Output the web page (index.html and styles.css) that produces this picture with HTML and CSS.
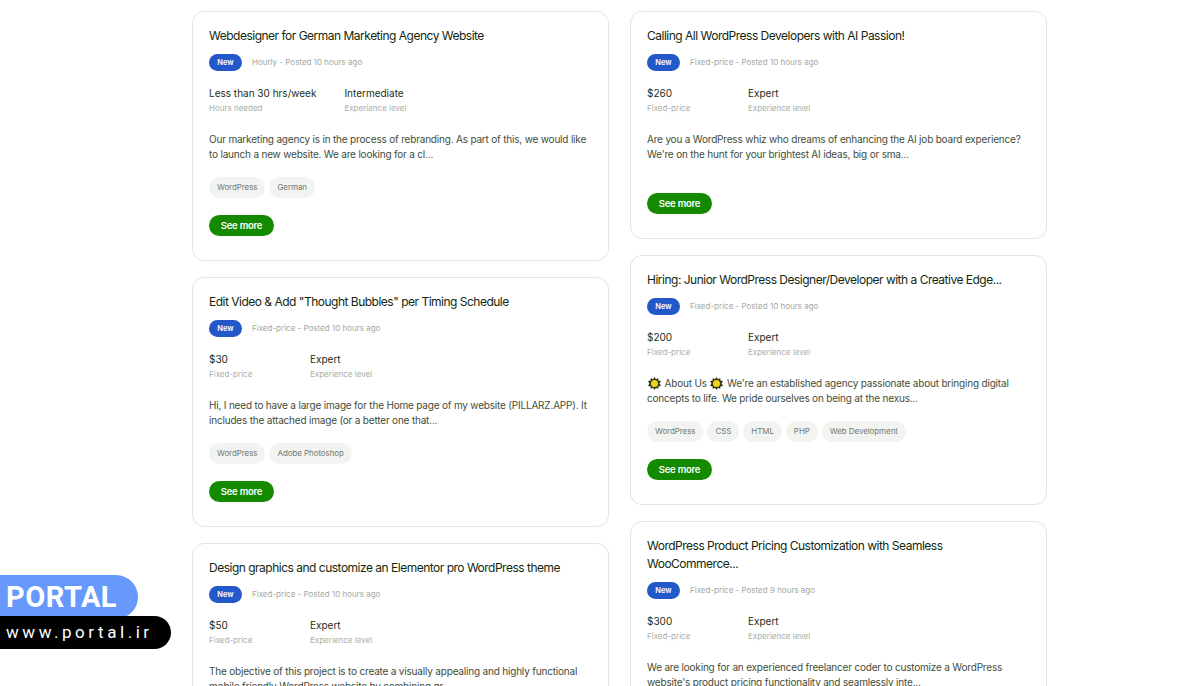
FILE: index.html
```html
<!DOCTYPE html>
<html>
<head>
  <title>Jobs</title>
  <link rel="stylesheet" href="styles.css">
</head>
<body>
  <svg width="0" height="0" class="defs">
    <symbol id="star" viewBox="0 0 14 14">
      <path fill="#2e3a12" d="M7 0l1.600 2.400L11 1l.2 2.800L14 4.400l-1.500 2.600L14 9.600l-2.800.6L11 13l-2.400-1.400L7 14l-1.600-2.400L3 13l-.2-2.800L0 9.600l1.500-2.600L0 4.400l2.800-.6L3 1l2.400 1.400z"/>
      <circle cx="7" cy="7" r="3.800" fill="#f2d21c"/>
    </symbol>
  </svg>

  <div class="columns">
    <div class="column">
      <div class="card">
        <h3>Webdesigner for German Marketing Agency Website</h3>
        <div class="meta"><span class="badge">New</span><span>Hourly - Posted 10 hours ago</span></div>
        <div class="details">
          <div class="detail wide"><strong>Less than 30 hrs/week</strong><small>Hours needed</small></div>
          <div class="detail"><strong>Intermediate</strong><small>Experience level</small></div>
        </div>
        <p>Our marketing agency is in the process of rebranding. As part of this, we would like to launch a new website. We are looking for a cl...</p>
        <div class="tags"><span>WordPress</span><span>German</span></div>
        <button>See more</button>
      </div>

      <div class="card">
        <h3>Edit Video &amp; Add "Thought Bubbles" per Timing Schedule</h3>
        <div class="meta"><span class="badge">New</span><span>Fixed-price - Posted 10 hours ago</span></div>
        <div class="details">
          <div class="detail"><strong>$30</strong><small>Fixed-price</small></div>
          <div class="detail"><strong>Expert</strong><small>Experience level</small></div>
        </div>
        <p>Hi, I need to have a large image for the Home page of my website (PILLARZ.APP). It includes the attached image (or a better one that...</p>
        <div class="tags"><span>WordPress</span><span>Adobe Photoshop</span></div>
        <button>See more</button>
      </div>

      <div class="card">
        <h3>Design graphics and customize an Elementor pro WordPress theme</h3>
        <div class="meta"><span class="badge">New</span><span>Fixed-price - Posted 10 hours ago</span></div>
        <div class="details">
          <div class="detail"><strong>$50</strong><small>Fixed-price</small></div>
          <div class="detail"><strong>Expert</strong><small>Experience level</small></div>
        </div>
        <p>The objective of this project is to create a visually appealing and highly functional mobile friendly WordPress website by combining gr...</p>
      </div>
    </div>

    <div class="column">
      <div class="card">
        <h3>Calling All WordPress Developers with AI Passion!</h3>
        <div class="meta"><span class="badge">New</span><span>Fixed-price - Posted 10 hours ago</span></div>
        <div class="details">
          <div class="detail"><strong>$260</strong><small>Fixed-price</small></div>
          <div class="detail"><strong>Expert</strong><small>Experience level</small></div>
        </div>
        <p>Are you a WordPress whiz who dreams of enhancing the AI job board experience? We're on the hunt for your brightest AI ideas, big or sma...</p>
        <button class="no-tags">See more</button>
      </div>

      <div class="card">
        <h3>Hiring: Junior WordPress Designer/Developer with a Creative Edge...</h3>
        <div class="meta"><span class="badge">New</span><span>Fixed-price - Posted 10 hours ago</span></div>
        <div class="details">
          <div class="detail"><strong>$200</strong><small>Fixed-price</small></div>
          <div class="detail"><strong>Expert</strong><small>Experience level</small></div>
        </div>
        <p><svg class="star"><use href="#star"/></svg> About Us <svg class="star"><use href="#star"/></svg> We're an established agency passionate about bringing digital concepts to life. We pride ourselves on being at the nexus...</p>
        <div class="tags"><span>WordPress</span><span>CSS</span><span>HTML</span><span>PHP</span><span>Web Development</span></div>
        <button>See more</button>
      </div>

      <div class="card">
        <h3>WordPress Product Pricing Customization with Seamless WooCommerce...</h3>
        <div class="meta"><span class="badge">New</span><span>Fixed-price - Posted 9 hours ago</span></div>
        <div class="details">
          <div class="detail"><strong>$300</strong><small>Fixed-price</small></div>
          <div class="detail"><strong>Expert</strong><small>Experience level</small></div>
        </div>
        <p>We are looking for an experienced freelancer coder to customize a WordPress website's product pricing functionality and seamlessly inte...</p>
      </div>
    </div>
  </div>

  <div class="portal">
    <div class="portal-name">PORTAL</div>
    <div class="portal-url">www.portal.ir</div>
  </div>
</body>
</html>
```

FILE: styles.css
```css
html, body {
  height: 686px;
  overflow: hidden;
}

body {
  font-family: Inter, "Liberation Sans", sans-serif;
  margin: 0;
  background-color: #fff;
  color: #1c2e14;
}

.defs {
  display: block;
  height: 0;
}

.columns {
  display: flex;
  gap: 21px;
  padding: 11px 0 0 192px;
}

.column {
  display: flex;
  flex-direction: column;
  gap: 16px;
  width: 417px;
}

.card {
  flex-shrink: 0;
  padding: 15px 16px 24px;
  border: 1px solid #e2e6e1;
  border-radius: 12px;
  background-color: #fff;
}

h3 {
  margin: 0;
  font-size: 12px;
  font-weight: 400;
  line-height: 18px;
  letter-spacing: -0.5px;
  color: #14280f;
}

.meta {
  display: flex;
  align-items: center;
  gap: 10px;
  margin-top: 9px;
  font-size: 8px;
  color: #a3a8a1;
}

.meta span:last-child {
  padding-bottom: 2px;
}

.badge {
  width: 33px;
  line-height: 17px;
  border-radius: 9px;
  background-color: #2358c8;
  color: #fff;
  font-size: 7.500px;
  font-weight: 600;
  text-align: center;
}

.details {
  display: flex;
  gap: 28px;
  margin-top: 14px;
}

.detail {
  min-width: 73px;
}

.detail strong {
  display: block;
  font-size: 10px;
  font-weight: 400;
  line-height: 16px;
  color: #1c2e14;
}

.detail small {
  display: block;
  margin-top: 1px;
  font-size: 8px;
  line-height: 12px;
  color: #a9aea7;
}

p {
  margin: 18px 0 0;
  font-size: 10px;
  line-height: 15px;
  letter-spacing: -0.19px;
  color: #3f4d3a;
}

.star {
  width: 13px;
  height: 13px;
  margin: 0 1px;
  vertical-align: -3px;
}

.tags {
  display: flex;
  gap: 4px;
  margin-top: 15px;
}

.tags span {
  padding: 0 8px 1px;
  line-height: 20px;
  border-radius: 11px;
  background-color: #f2f4f1;
  color: #737a71;
  font-size: 8px;
  letter-spacing: -0.08px;
}

button {
  display: block;
  width: 65px;
  height: 21px;
  margin-top: 17px;
  padding: 0 0 1px;
  border: none;
  border-radius: 11px;
  background-color: #148a00;
  color: #fff;
  font-family: inherit;
  font-size: 9.500px;
  font-weight: 600;
  letter-spacing: -0.25px;
}

button.no-tags {
  margin-top: 31px;
}

.portal {
  position: absolute;
  left: 0;
  top: 575px;
}

.portal-name {
  width: 138px;
  height: 44px;
  padding-left: 6px;
  box-sizing: border-box;
  border-radius: 0 22px 22px 0;
  background-color: #6699fb;
  color: #fff;
  font-family: Roboto, sans-serif;
  font-size: 29px;
  font-weight: 700;
  line-height: 44px;
  letter-spacing: 0.5px;
}

.portal-url {
  width: 171px;
  height: 33px;
  margin-top: -3px;
  padding-left: 6px;
  box-sizing: border-box;
  border-radius: 0 17px 17px 0;
  background-color: #000;
  color: #fff;
  font-family: Roboto, sans-serif;
  font-size: 17px;
  line-height: 33px;
  letter-spacing: 3.550px;
}
```
